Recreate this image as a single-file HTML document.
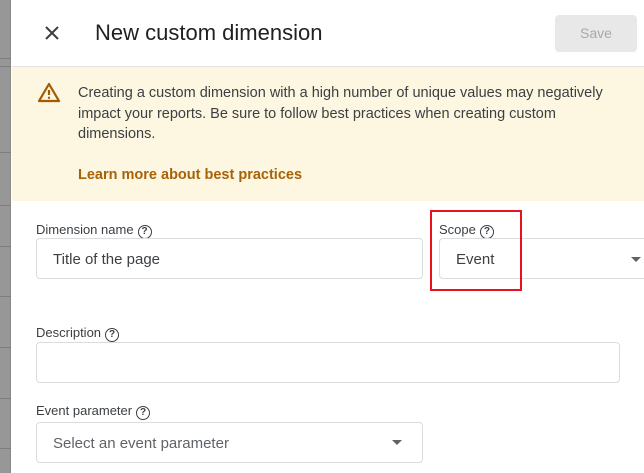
<!DOCTYPE html>
<html><head><meta charset="utf-8"><style>
*{margin:0;padding:0;box-sizing:border-box}
body{width:644px;height:473px;overflow:hidden;background:#fff;font-family:"Liberation Sans",Arial,sans-serif;position:relative}
.strip{position:absolute;left:0;top:0;width:11px;height:473px;background:#979797;border-right:1px solid #8a8a8a}
.strip i{position:absolute;left:0;width:11px;height:1px;background:#7d7d7d}
.panel{position:absolute;left:12px;top:0;right:0;bottom:0;background:#fff}
.abs{position:absolute}
.title{left:83px;top:20px;font-size:22px;color:#202124}
.save{left:543px;top:15px;width:82px;height:37px;background:#e8e8e8;border-radius:4px;color:#a8a8a8;font-size:14px;text-align:center;line-height:37px}
.banner{left:0;top:66px;right:0;height:135px;background:#fdf6e0;border-top:1px solid #e2e2e2}
.btxt{left:66px;top:16px;width:545px;font-size:14.5px;line-height:20.5px;color:#3c4043}
.link{left:66px;top:100px;font-size:14.5px;font-weight:bold;color:#a86207}
.label{font-size:13px;color:#3c4043}
.q{display:inline-block;width:14px;height:14px;border:1.6px solid #3c4043;border-radius:50%;font-size:10px;line-height:11px;text-align:center;font-weight:bold;vertical-align:0px;margin-left:4px}
.field{border:1px solid #dadce0;border-radius:4px;height:41px;font-size:15px;color:#3c4043;line-height:41px;padding-left:16px}
.arrow{position:absolute;width:0;height:0;border-left:5px solid transparent;border-right:5px solid transparent;border-top:5px solid #5f6368}
</style></head><body>
<div class="strip"><i style="top:58px"></i><i style="top:66px"></i><i style="top:152px"></i><i style="top:205px"></i><i style="top:246px"></i><i style="top:296px"></i><i style="top:347px"></i><i style="top:398px"></i><i style="top:448px"></i></div>
<div class="panel">
<svg class="abs" style="left:32px;top:25px" width="16" height="16" viewBox="0 0 16 16"><path d="M2 2L14 14M14 2L2 14" stroke="#3c4043" stroke-width="2"/></svg>
<div class="abs title">New custom dimension</div>
<div class="abs save">Save</div>
<div class="abs banner">
<svg class="abs" style="left:25px;top:15px" width="24" height="21" viewBox="0 0 24 21"><path d="M12 2L22 19H2Z" fill="none" stroke="#a35a00" stroke-width="2.2" stroke-linejoin="round"/><path d="M12 8v5" stroke="#a35a00" stroke-width="2.2"/><circle cx="12" cy="15.8" r="1.2" fill="#a35a00"/></svg>
<div class="abs btxt">Creating a custom dimension with a high number of unique values may negatively impact your reports. Be sure to follow best practices when creating custom dimensions.</div>
<div class="abs link">Learn more about best practices</div>
</div>
<div class="abs label" style="left:24px;top:222px">Dimension name<span class="q">?</span></div>
<div class="abs field" style="left:24px;top:238px;width:387px">Title of the page</div>
<div class="abs label" style="left:427px;top:222px">Scope<span class="q">?</span></div>
<div class="abs field" style="left:427px;top:238px;width:220px;border-right:none">Event</div>
<div class="arrow" style="left:619px;top:257px"></div>
<div class="abs" style="left:418px;top:210px;width:92px;height:81px;border:2px solid #e8111c"></div>
<div class="abs label" style="left:24px;top:325px">Description<span class="q">?</span></div>
<div class="abs field" style="left:24px;top:342px;width:584px"></div>
<div class="abs label" style="left:24px;top:403px">Event parameter<span class="q">?</span></div>
<div class="abs field" style="left:24px;top:422px;width:387px;color:#5f6368">Select an event parameter</div>
<div class="arrow" style="left:380px;top:440px"></div>
</div>
</body></html>
